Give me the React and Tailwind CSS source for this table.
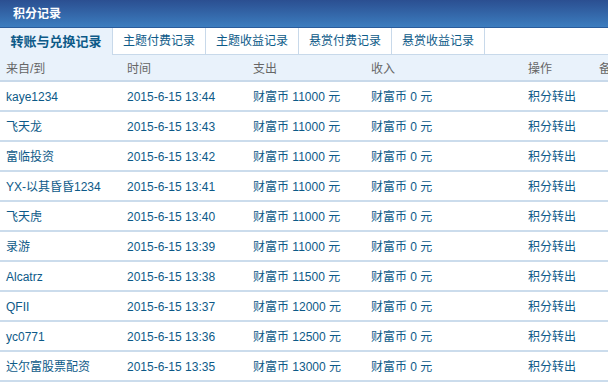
import React from "react";

const rows = [
  ["kaye1234", "2015-6-15 13:44", "11000"],
  ["飞天龙", "2015-6-15 13:43", "11000"],
  ["富临投资", "2015-6-15 13:42", "11000"],
  ["YX-以其昏昏1234", "2015-6-15 13:41", "11000"],
  ["飞天虎", "2015-6-15 13:40", "11000"],
  ["录游", "2015-6-15 13:39", "11000"],
  ["Alcatrz", "2015-6-15 13:38", "11500"],
  ["QFII", "2015-6-15 13:37", "12000"],
  ["yc0771", "2015-6-15 13:36", "12500"],
  ["达尔富股票配资", "2015-6-15 13:35", "13000"],
];

const font = { fontFamily: '"Liberation Sans", "Noto Sans CJK SC", sans-serif' };
const grid = "grid grid-cols-[121px_126px_118px_157px_71px_60px] w-[653px]";

export default function App() {
  return (
    <div className="w-[608px] h-[390px] overflow-hidden bg-white text-[12px]" style={font}>
      <div className="h-[28px] bg-gradient-to-b from-[#2b4f91] to-[#3c7dbf] border-b border-[#2a5c9c] flex items-center pl-[13px]">
        <span className="text-white font-bold text-[12px]">积分记录</span>
      </div>
      <div className="h-[27px] flex border-b border-[#c8d9ea]">
        <div className="w-[113px] h-[27px] bg-[#e9f2fb] border-r border-[#c8d9ea] flex items-center justify-center font-bold text-[13px] text-[#0d5a88]">
          转账与兑换记录
        </div>
        {["主题付费记录", "主题收益记录", "悬赏付费记录", "悬赏收益记录"].map((t) => (
          <div key={t} className="w-[93px] flex items-center justify-center border-r border-[#c8d9ea] text-[#0d5a88] text-[12px]">
            {t}
          </div>
        ))}
      </div>
      <div className={`${grid} h-[27px] pt-[2px] bg-[#e9f2fb] border-b-2 border-[#c8d9ea] items-center text-[#666]`}>
        <div className="pl-[6px]">来自/到</div>
        <div className="pl-[6px]">时间</div>
        <div className="pl-[6px]">支出</div>
        <div className="pl-[6px]">收入</div>
        <div className="pl-[6px]">操作</div>
        <div className="pl-[6px]">备注</div>
      </div>
      {rows.map(([from, time, amt]) => (
        <div key={time} className={`${grid} h-[30px] pt-[2px] border-b-2 border-[#cbdcec] items-center text-[#0d5a88]`}>
          <div className="pl-[6px]">{from}</div>
          <div className="pl-[6px]">{time}</div>
          <div className="pl-[6px]">财富币 {amt} 元</div>
          <div className="pl-[6px]">财富币 0 元</div>
          <div className="pl-[6px]">积分转出</div>
          <div className="pl-[6px]"></div>
        </div>
      ))}
    </div>
  );
}
